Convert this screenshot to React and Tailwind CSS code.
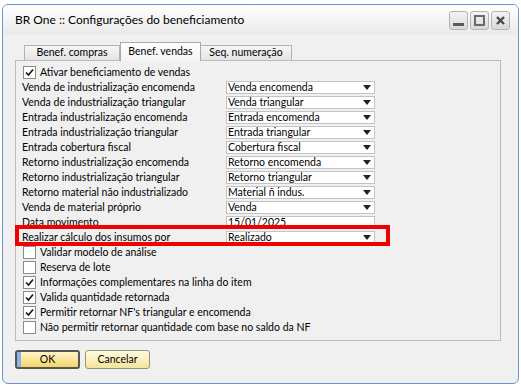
const FONT = { fontFamily: 'Lato, "Liberation Sans", sans-serif' }

const rows = [
  ['Venda de industrialização encomenda', 'Venda encomenda', true],
  ['Venda de industrialização triangular', 'Venda triangular', true],
  ['Entrada industrialização encomenda', 'Entrada encomenda', true],
  ['Entrada industrialização triangular', 'Entrada triangular', true],
  ['Entrada cobertura fiscal', 'Cobertura fiscal', true],
  ['Retorno industrialização encomenda', 'Retorno encomenda', true],
  ['Retorno industrialização triangular', 'Retorno triangular', true],
  ['Retorno material não industrializado', 'Material ñ indus.', true],
  ['Venda de material próprio', 'Venda', true],
  ['Data movimento', '15/01/2025', false],
  ['Realizar cálculo dos insumos por', 'Realizado', true],
]

const checks = [
  ['Validar modelo de análise', false],
  ['Reserva de lote', false],
  ['Informações complementares na linha do item', true],
  ['Valida quantidade retornada', true],
  ['Permitir retornar NF\'s triangular e encomenda', true],
  ['Não permitir retornar quantidade com base no saldo da NF', false],
]

function CheckBox({ checked }) {
  return (
    <div className="flex h-[13px] w-[13px] items-center justify-center border border-[#8c8c8c] bg-white">
      {checked ? (
        <svg width="9" height="9" viewBox="0 0 9 9">
          <path d="M1 4.5 L3.5 7 L8 1.5" fill="none" stroke="#1a1a1a" strokeWidth="1.7" />
        </svg>
      ) : null}
    </div>
  )
}

function CheckRow({ label, checked }) {
  return (
    <div className="flex h-[15px] items-center pl-[7px]">
      <CheckBox checked={checked} />
      <span className="ml-[4px] text-[10.5px] leading-none text-black">{label}</span>
    </div>
  )
}

function Field({ value, arrow }) {
  return (
    <div className="flex h-[13px] w-[149px] items-center justify-between border border-[#c3c3c3] bg-white pl-[1px] pr-[3px]">
      <span className="text-[10.5px] leading-none text-black">{value}</span>
      {arrow ? (
        <svg width="8" height="5" viewBox="0 0 8 5">
          <path d="M0 0 H8 L4 5 Z" fill="#222" />
        </svg>
      ) : null}
    </div>
  )
}

function TitleButton({ children }) {
  return (
    <div className="flex h-[19px] w-[19px] items-center justify-center rounded-[3px] border border-[#b4b4b4] bg-gradient-to-b from-[#f4f4f4] to-[#d9d9d9]">
      {children}
    </div>
  )
}

export default function App() {
  return (
    <div className="h-[386px] w-[521px] bg-white pl-[2px] pt-[4px]" style={FONT}>
      <div className="flex h-[380px] w-[517px] flex-col overflow-hidden rounded-[6px] border border-[#6b97d6] bg-[#f0f0f0]">
        <div className="flex h-[30px] shrink-0 items-center justify-between bg-gradient-to-b from-[#ffffff] to-[#e9e9e9] pl-[12px] pr-[8px]">
          <span className="text-[12px] text-black">BR One :: Configurações do beneficiamento</span>
          <div className="flex gap-[2px]">
            <TitleButton>
              <div className="mt-[8px] h-[3px] w-[11px] bg-[#5a5a5a]" />
            </TitleButton>
            <TitleButton>
              <div className="h-[11px] w-[11px] border-2 border-[#6a6a6a]" />
            </TitleButton>
            <TitleButton>
              <svg width="11" height="11" viewBox="0 0 11 11">
                <path d="M2 2 L9 9 M9 2 L2 9" stroke="#4a4a4a" strokeWidth="2.4" />
              </svg>
            </TitleButton>
          </div>
        </div>

        <div className="flex flex-col pl-[12px] pt-[7px]">
          <div className="flex h-[18px] items-end pl-[9px] text-[10.5px] text-black">
            <div className="flex h-[15px] w-[96px] items-center justify-center border border-b-0 border-[#b2b2b2] bg-gradient-to-b from-[#f6f6f6] to-[#e4e4e4]">
              Benef. compras
            </div>
            <div className="relative z-10 -mb-px flex h-[19px] w-[81px] items-center justify-center border border-b-0 border-[#a9a9a9] bg-gradient-to-b from-[#ffffff] to-[#f4f4f4]">
              Benef. vendas
            </div>
            <div className="flex h-[15px] w-[91px] items-center justify-center border border-b-0 border-l-0 border-[#b2b2b2] bg-gradient-to-b from-[#f6f6f6] to-[#e4e4e4]">
              Seq. numeração
            </div>
          </div>

          <div className="relative flex h-[281px] w-[486px] flex-col border border-[#bcbcbc] pt-[4px]">
            <CheckRow label="Ativar beneficiamento de vendas" checked />
            {rows.map(([label, value, arrow]) => (
              <div key={label} className="flex h-[15px] items-center pl-[6px]">
                <span className="w-[204px] text-[10.5px] leading-none text-black">{label}</span>
                <Field value={value} arrow={arrow} />
              </div>
            ))}
            {checks.map(([label, checked]) => (
              <CheckRow key={label} label={label} checked={checked} />
            ))}
            <div className="absolute left-[-1px] top-[164px] h-[21px] w-[375px] border-4 border-[#f00000]" />
          </div>

          <div className="mt-[9px] flex gap-[5px] text-[10.5px] text-black">
            <div className="flex h-[19px] w-[65px] overflow-hidden rounded-[3px] border-2 border-[#555555] bg-gradient-to-b from-[#fff6c8] to-[#f3d466]">
              <div className="w-[4px] bg-[#8db3e6]" />
              <div className="flex flex-1 items-center justify-center pr-[4px]">OK</div>
            </div>
            <div className="flex h-[19px] w-[65px] items-center justify-center rounded-[3px] border border-[#9c9277] bg-gradient-to-b from-[#fffbe2] to-[#f6e39a]">
              Cancelar
            </div>
          </div>
        </div>
      </div>
    </div>
  )
}
